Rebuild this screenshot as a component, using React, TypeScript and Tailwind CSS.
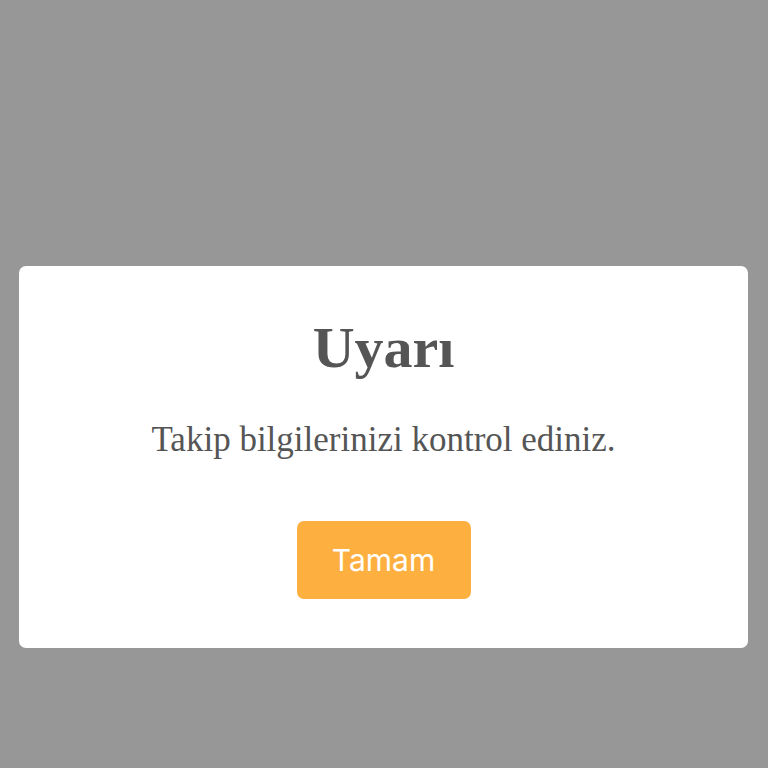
export default function App() {
  return (
    <div className="w-[768px] h-[768px] bg-[#979797] pt-[266px] pl-[19px]">
      <div className="w-[729px] h-[382px] bg-white rounded-[7px] flex flex-col items-center">
        <h1 className="mt-[42px] text-[58px] leading-[80px] font-bold text-[#555555] font-['Liberation_Serif',serif]">
          Uyarı
        </h1>
        <p className="mt-[32px] text-[35px] leading-[40px] text-[#555555] font-['Liberation_Serif',serif]">
          Takip bilgilerinizi kontrol ediniz.
        </p>
        <button className="mt-[61px] w-[174px] h-[78px] rounded-[7px] bg-[#fdb03f] text-white text-[30px] font-['Inter',sans-serif]">
          Tamam
        </button>
      </div>
    </div>
  );
}
